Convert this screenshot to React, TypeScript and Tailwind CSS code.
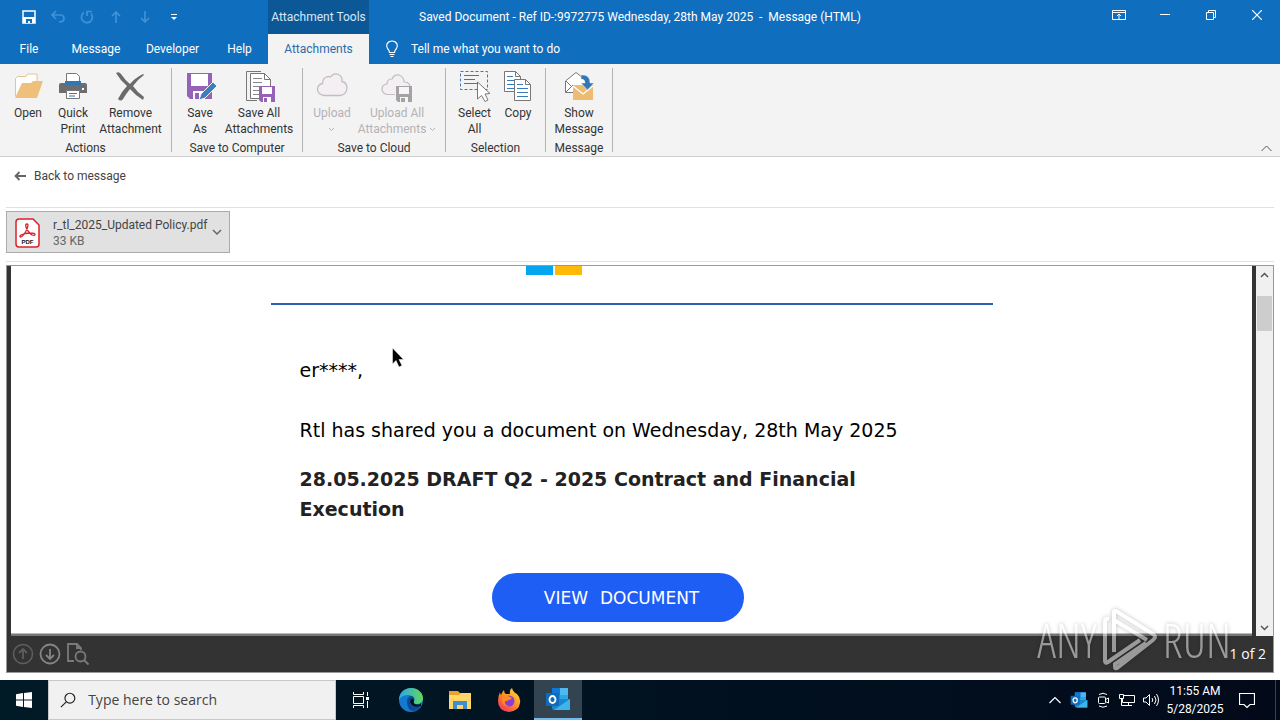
import type { ReactNode } from 'react'

type IconProps = { children: ReactNode; size?: number }

function Icon({ children, size = 32 }: IconProps) {
  return (
    <svg width={size} height={size} viewBox={`0 0 ${size} ${size}`} fill="none" aria-hidden="true">
      {children}
    </svg>
  )
}

function OpenIcon() {
  return (
    <Icon>
      <path d="M3.500 26V8.500l2-2H14l1.500-2.500h9.500v8" fill="#fff" stroke="#e8c48c" />
      <path d="M3 28 10 13h9l2-2h10l-6 17Z" fill="#eec07c" />
    </Icon>
  )
}

function PrintIcon() {
  return (
    <Icon>
      <path d="M9.500 12V3.500h10l3 3V12" fill="#fff" stroke="#777" />
      <path d="M4 13h24q2 0 2 2v8H2v-8q0-2 2-2Z" fill="#6d6d6d" />
      <path d="M8 11h16v4H8z" fill="#2f78b5" />
      <path d="M25 18h2v2h-2z" fill="#fff" />
      <path d="M9.500 20.500h13v8h-13z" fill="#fff" stroke="#777" />
      <path d="M12 23.500h8M12 26h6" stroke="#2f78b5" />
    </Icon>
  )
}

function RemoveIcon() {
  return (
    <Icon>
      <path d="M1 3q3-2 5 1 4 6 9 10 5-6 13-10l1 1q-7 5-11 11 4 6 11 11l-1 3q-8-5-13-11-4 5-7 10-2 3-5 0 4-8 9-13Q5 10 1 3Z" fill="#6b6b6b" />
    </Icon>
  )
}

function SaveAsIcon() {
  return (
    <Icon>
      <path d="M3 3h25v26H6l-3-3Z" fill="#9463b8" />
      <path d="M7 4h17v12H7z" fill="#fff" />
      <path d="M9 21h12v8H9z" fill="#fff" />
      <path d="M11 23h4v6h-4z" fill="#9463b8" />
      <path d="M15 30 17 24 29 12l4 4-12 12Z" fill="#3b7fc0" stroke="#f3f3f3" />
    </Icon>
  )
}

function SaveAllIcon() {
  return (
    <Icon>
      <path d="M14 30.500H3.500V1.500H18" stroke="#777" />
      <path d="M16 28.500H7.500V3.500h14l6 6V16" fill="#fff" stroke="#777" />
      <path d="M21.500 3.500v6h6" stroke="#777" />
      <path d="M10 8.500h9M10 12.500h9M10 16.500h6M10 20.500h6M10 24.500h6" stroke="#888" />
      <path d="M16 16h16v16H18l-2-2Z" fill="#9463b8" />
      <path d="M19 17h10v7H19zM20 27h8v5h-8z" fill="#fff" />
      <path d="M21 28h3v4h-3z" fill="#9463b8" />
    </Icon>
  )
}

function UploadIcon() {
  return (
    <Icon>
      <path d="M8 25.500q-6-1-6.500-6 0-5 5-6 0-5 4-6.500 2-1 4 0 3-4.500 8-2.500 4 2 3.500 7 5 1 5 6.500-.500 6.500-7 7.500Z" stroke="#c4bcc4" strokeWidth="1.300" fill="#f3eff3" />
    </Icon>
  )
}

function UploadAllIcon() {
  return (
    <Icon>
      <path d="M14 24.500H6q-5-1-5-5.500t5-5q0-5 5-5 2-5 7-4 5 2 5 7 5 0 6 4" stroke="#c4bcc4" strokeWidth="1.200" fill="#f3eff3" />
      <path d="M15 16h16v16H17l-2-2Z" fill="#a5a2a5" />
      <path d="M18 17h10v7H18zM19 27h8v5h-8z" fill="#f6f6f6" />
      <path d="M20 28h4v4h-4z" fill="#a5a2a5" />
    </Icon>
  )
}

function SelectAllIcon() {
  return (
    <Icon>
      <path d="M1.500 1.500h27v18h-27z" stroke="#3a7ab8" strokeDasharray="3 2" />
      <path d="M5 5.500h15M5 9.500h11M5 13.500h15" stroke="#3a7ab8" />
      <path d="M18.500 12v17l4-3.500 3.500 6 3-1.500-3-6 5-.500Z" fill="#fff" stroke="#777" />
    </Icon>
  )
}

function CopyIcon() {
  return (
    <Icon>
      <path d="M2.500 1.500h11l5 5v15h-16z" fill="#fff" stroke="#777" />
      <path d="M13.500 1.500v5h5" stroke="#777" />
      <path d="M5 6.500h6M5 10.500h8M5 14.500h8M5 18.500h8" stroke="#3a7ab8" />
      <path d="M12.500 9.500h11l5 5v16h-16z" fill="#fff" stroke="#777" />
      <path d="M23.500 9.500v5h5" stroke="#777" />
      <path d="M15 14.500h6M15 18.500h11M15 22.500h11M15 26.500h11" stroke="#3a7ab8" />
    </Icon>
  )
}

function ShowMessageIcon() {
  return (
    <Icon>
      <path d="M2.500 22.500V11L13 2.500 24 11v11.500Z" fill="#fff" stroke="#777" />
      <path d="m3 22 7-7M3 11l6 6" stroke="#777" />
      <path d="M10 15h20v15H10z" fill="#eebb72" />
      <path d="m10 16 10 8 10-8" stroke="#fff" strokeWidth="1.300" />
      <path d="M18 5q9-1 9 8h4l-6.500 7-6.500-7h4q0-4-4-4Z" fill="#2f78b5" stroke="#f3f3f3" strokeWidth=".500" />
    </Icon>
  )
}

function Caret() {
  return (
    <svg width="7" height="5" viewBox="0 0 7 5" fill="none" className="inline-block" aria-hidden="true">
      <path d="m1 1 2.500 2.500L6 1" stroke="currentColor" />
    </svg>
  )
}

type RibbonButtonProps = { icon: ReactNode; width: string; disabled?: boolean; children: ReactNode }

function RibbonButton({ icon, width, disabled, children }: RibbonButtonProps) {
  return (
    <button
      disabled={disabled}
      className={`flex flex-col items-center whitespace-nowrap text-center leading-4 text-[#333] disabled:text-[#b5b2b5] ${width}`}
    >
      <span className="mb-px flex h-9 items-center">{icon}</span>
      <span>{children}</span>
    </button>
  )
}

type RibbonGroupProps = { label: string; children: ReactNode }

function RibbonGroup({ label, children }: RibbonGroupProps) {
  return (
    <section className="flex h-[84px] flex-col border-r border-[#b4b4b4] px-[6px]">
      <div className="flex h-[72px] shrink-0 justify-center">{children}</div>
      <h2 className="whitespace-nowrap text-center leading-4 text-[#333]">{label}</h2>
    </section>
  )
}

function Header() {
  return (
    <header className="bg-[#106ebe] text-white">
      <div className="grid h-[34px] grid-cols-[1fr_auto_1fr]">
        <div className="flex">
          <div className="flex w-[268px] items-center gap-[5px] pl-[17px]">
            <button aria-label="Save" className="flex w-6 justify-center">
              <Icon size={16}>
                <path d="M2 2h12v12H2z" stroke="#fff" strokeWidth="1.500" />
                <path d="M2 8h12v6H2z" fill="#fff" />
                <path d="M5 10h6v4H9v-2H7v2H5z" fill="#106ebe" />
              </Icon>
            </button>
            <button aria-label="Undo" className="flex w-6 justify-center text-[#3f92d8]">
              <Icon size={16}>
                <path d="M6 2 2 6l4 4M2 6h8q4 0 4 3.500T9 13" stroke="currentColor" strokeWidth="1.700" />
              </Icon>
            </button>
            <button aria-label="Redo" className="flex w-6 justify-center text-[#3f92d8]">
              <Icon size={16}>
                <path d="M5 3.500a5.500 5.500 0 1 0 7 1M8 7V2.500h5" stroke="currentColor" strokeWidth="1.700" />
              </Icon>
            </button>
            <button aria-label="Previous item" className="flex w-6 justify-center text-[#3f92d8]">
              <Icon size={16}>
                <path d="M8 14V3M4 7l4-4 4 4" stroke="currentColor" strokeWidth="1.700" />
              </Icon>
            </button>
            <button aria-label="Next item" className="flex w-6 justify-center text-[#3f92d8]">
              <Icon size={16}>
                <path d="M8 2v11M4 9l4 4 4-4" stroke="currentColor" strokeWidth="1.700" />
              </Icon>
            </button>
            <button aria-label="Customize toolbar" className="flex w-6 justify-center">
              <Icon size={8}>
                <path d="M1 1.500h6" stroke="#fff" />
                <path d="M1 4h6L4 7Z" fill="#fff" />
              </Icon>
            </button>
          </div>
          <div className="flex w-[101px] items-center justify-center whitespace-nowrap bg-[#0c5796] text-[#d5e8f8]">
            Attachment Tools
          </div>
        </div>
        <h1 className="self-center whitespace-pre leading-4">
          Saved Document - Ref ID-:9972775 Wednesday, 28th May 2025{'  -  '}Message (HTML)
        </h1>
        <div className="flex h-[30px] justify-end">
          <button aria-label="Ribbon display options" className="flex w-[46px] items-center justify-center">
            <Icon size={14}>
              <path d="M.500 2.500h13v9H.500zM.500 4.500h13M7 11V6M5 8l2-2 2 2" stroke="#fff" />
            </Icon>
          </button>
          <button aria-label="Minimize" className="flex w-[46px] items-center justify-center">
            <Icon size={10}>
              <path d="M0 4.500h10" stroke="#fff" />
            </Icon>
          </button>
          <button aria-label="Restore" className="flex w-[46px] items-center justify-center">
            <Icon size={10}>
              <path d="M.500 2.500h7v7h-7zM2.500 2V.500h7v7H8" stroke="#fff" />
            </Icon>
          </button>
          <button aria-label="Close" className="flex w-[46px] items-center justify-center">
            <Icon size={10}>
              <path d="m0 0 10 10M10 0 0 10" stroke="#fff" strokeWidth="1.200" />
            </Icon>
          </button>
        </div>
      </div>
      <nav className="flex h-[30px] items-stretch">
        <button className="w-[58px]">File</button>
        <button className="w-[76px]">Message</button>
        <button className="w-[77px]">Developer</button>
        <button className="w-[57px]">Help</button>
        <button className="w-[101px] bg-[#f3f3f3] text-[#2b6cab]">Attachments</button>
        <button className="flex items-center gap-3 pl-4">
          <svg width="14" height="18" viewBox="0 0 14 18" fill="none" aria-hidden="true">
            <path d="M4.500 12.500q0-2-2-4Q1 6.500 2 4q1.500-3 5-3t5 3q1 2.500-.500 4.500-2 2-2 4ZM4.500 14.500h5M5.500 16.500h3" stroke="#fff" strokeWidth="1.200" />
          </svg>
          Tell me what you want to do
        </button>
      </nav>
    </header>
  )
}

function Ribbon() {
  return (
    <div className="flex h-[93px] border-b border-[#cfcfcf] bg-[#f3f3f3] pt-1">
      <RibbonGroup label="Actions">
        <RibbonButton icon={<OpenIcon />} width="w-[44px]">Open</RibbonButton>
        <RibbonButton icon={<PrintIcon />} width="w-[46px]">Quick<br />Print</RibbonButton>
        <RibbonButton icon={<RemoveIcon />} width="w-[69px]">Remove<br />Attachment</RibbonButton>
      </RibbonGroup>
      <RibbonGroup label="Save to Computer">
        <RibbonButton icon={<SaveAsIcon />} width="w-[44px]">Save<br />As</RibbonButton>
        <RibbonButton icon={<SaveAllIcon />} width="w-[74px]">Save All<br />Attachments</RibbonButton>
      </RibbonGroup>
      <RibbonGroup label="Save to Cloud">
        <RibbonButton icon={<UploadIcon />} width="w-[46px]" disabled>Upload<br /><Caret /></RibbonButton>
        <RibbonButton icon={<UploadAllIcon />} width="w-[84px]" disabled>
          Upload All<br />Attachments <Caret />
        </RibbonButton>
      </RibbonGroup>
      <RibbonGroup label="Selection">
        <RibbonButton icon={<SelectAllIcon />} width="w-[45px]">Select<br />All</RibbonButton>
        <RibbonButton icon={<CopyIcon />} width="w-[42px]">Copy</RibbonButton>
      </RibbonGroup>
      <RibbonGroup label="Message">
        <RibbonButton icon={<ShowMessageIcon />} width="w-[54px]">Show<br />Message</RibbonButton>
      </RibbonGroup>
      <button aria-label="Collapse the ribbon" className="mr-2 mb-1 ml-auto self-end">
        <svg width="11" height="7" viewBox="0 0 11 7" fill="none" aria-hidden="true">
          <path d="m.500 6 5-5 5 5" stroke="#555" />
        </svg>
      </button>
    </div>
  )
}

function AttachmentBar() {
  return (
    <div className="mx-[6px]">
      <div className="h-[51px] border-b border-[#e1e1e1] pt-[10px]">
        <button className="flex items-center gap-[7px] pl-2 leading-[18px] text-[#444]">
          <svg width="13" height="10" viewBox="0 0 13 10" fill="none" aria-hidden="true">
            <path d="M5.500 1 1.500 5l4 4M2 5h10" stroke="#666" strokeWidth="1.800" />
          </svg>
          Back to message
        </button>
      </div>
      <div className="h-[54px] border-b border-[#e1e1e1] pt-[3px]">
        <button className="flex h-[42px] w-56 items-center border border-[#ababab] bg-[#e1e1e1] pt-px pl-2 text-left leading-4 text-[#444]">
          <svg width="25" height="30" viewBox="0 0 25 30" fill="none" aria-hidden="true">
            <path d="M4 1h14l6 6v19q0 3-3 3H4q-3 0-3-3V4q0-3 3-3Z" fill="#fff" stroke="#d9222a" strokeWidth="1.500" />
            <path d="M12 6q-2 0-1 3 1 4 6 8 3 1 3-.500T15 15q-5 0-9 2-2 1.500-.500 2 2 0 5-5 2.500-4 2.500-7 0-1-1-1Z" stroke="#d9222a" strokeWidth="1.300" />
            <text x="12.500" y="26" textAnchor="middle" fontFamily="Liberation Sans, sans-serif" fontSize="6" fontWeight="bold" fill="#111">PDF</text>
          </svg>
          <span className="ml-[13px] flex-1 whitespace-nowrap">
            <span className="block">r_tl_2025_Updated Policy.pdf</span>
            <span className="block text-[#666]">33 KB</span>
          </span>
          <svg width="10" height="7" viewBox="0 0 10 7" fill="none" className="mr-[7px]" aria-hidden="true">
            <path d="m1 1 4 4 4-4" stroke="#666" strokeWidth="1.500" />
          </svg>
        </button>
      </div>
    </div>
  )
}

function DocumentPage() {
  return (
    <article className="relative flex-1 overflow-hidden border-x-4 border-[#333] bg-white font-['DejaVu_Sans',sans-serif] text-[19px] leading-[30px] text-black">
      <div className="mx-auto w-full max-w-[722px]">
        <div className="flex h-[39px] gap-[2px] border-b-2 border-[#2b62b5] pl-[255px]">
          <span className="h-[9px] w-[27px] bg-[#05a6f0]" />
          <span className="h-[9px] w-[27px] bg-[#ffba08]" />
        </div>
        <div className="pt-[50px] pr-[57px] pl-[29px]">
          <p>er****,</p>
          <p className="mt-[30px] whitespace-nowrap">Rtl has shared you a document on Wednesday, 28th May 2025</p>
          <h2 className="mt-[19px] font-bold text-[#222]">
            28.05.2025 DRAFT Q2 - 2025 Contract and Financial
            <br />
            Execution
          </h2>
          <a
            href="#document"
            className="mx-auto mt-[49px] flex h-[49px] w-[252px] items-center justify-center gap-3 rounded-full bg-[#1f5ef5] pl-2 text-[17px] text-white"
          >
            <span>VIEW</span>
            <span>DOCUMENT</span>
          </a>
        </div>
      </div>
      <svg width="12" height="21" viewBox="0 0 12 21" className="absolute top-[81px] left-[381px]" aria-hidden="true">
        <path d="M.500 1v16l3.500-3.500 3 6.500 3-1.500-3-6h4.500Z" fill="#000" stroke="#fff" strokeWidth=".500" />
      </svg>
    </article>
  )
}

function Watermark() {
  return (
    <div className="pointer-events-none absolute right-[42px] bottom-0 flex h-16 items-center gap-[5px] font-['Open_Sans_Condensed_Light','Open_Sans_Condensed','Roboto_Condensed','Liberation_Sans_Narrow',sans-serif] text-[47px] leading-[60px] font-light text-white opacity-50 drop-shadow-[0_0_2px_rgba(0,0,0,0.5)]">
      <span>ANY</span>
      <svg width="56" height="62" viewBox="0 0 56 62" fill="none" aria-hidden="true">
        <path d="M12 43V3q0-2 2-1l37 23q4 3 0 6L15 59q-2 1-2-1v-3l31-21" stroke="currentColor" strokeWidth="4" />
        <path d="M7 10q-4-1-4 2v40q0 3 3 1l32-22M12 11l33 20" stroke="currentColor" strokeWidth="4" />
      </svg>
      <span>RUN</span>
    </div>
  )
}

function Viewer() {
  return (
    <main className="relative mx-[6px] mt-[3px] mb-[7px] flex min-h-0 flex-1 flex-col border border-[#999] bg-[#333]">
      <div className="flex min-h-0 flex-1">
        <div className="flex min-w-0 flex-1 flex-col">
          <DocumentPage />
          <div className="mx-1 h-[3px] border-t border-[#bbb] bg-[#777]" />
        </div>
        <div className="flex w-[17px] flex-col items-center bg-[#f0f0f0]">
          <button aria-label="Scroll up" className="flex h-[30px] items-start pt-[6px]">
            <svg width="9" height="6" viewBox="0 0 9 6" fill="none" aria-hidden="true">
              <path d="m1 5 3.500-3.500L8 5" stroke="#555" strokeWidth="1.500" />
            </svg>
          </button>
          <div className="h-[35px] w-[15px] bg-[#cdcdcd]" />
          <button aria-label="Scroll down" className="mt-auto pb-[5px]">
            <svg width="9" height="6" viewBox="0 0 9 6" fill="none" aria-hidden="true">
              <path d="m1 1 3.500 3.500L8 1" stroke="#555" strokeWidth="1.500" />
            </svg>
          </button>
        </div>
      </div>
      <Watermark />
      <div className="flex h-9 items-center gap-[5px] pr-[7px] pl-[5px]">
        <button aria-label="Previous page" className="text-[#5e5e5e]">
          <Icon size={22}>
            <path d="M11 16V6M7 10l4-4 4 4" stroke="currentColor" strokeWidth="1.800" />
            <circle cx="11" cy="11" r="9.500" stroke="currentColor" strokeWidth="1.600" />
          </Icon>
        </button>
        <button aria-label="Next page" className="text-[#858585]">
          <Icon size={22}>
            <path d="M11 6v10M7 12l4 4 4-4" stroke="currentColor" strokeWidth="1.800" />
            <circle cx="11" cy="11" r="9.500" stroke="currentColor" strokeWidth="1.800" />
          </Icon>
        </button>
        <button aria-label="Find in document" className="text-[#7a7a7a]">
          <Icon size={24}>
            <path d="M8 19H2V2h9l4 4v2M11 2v4h4" stroke="currentColor" strokeWidth="1.800" />
            <circle cx="14.500" cy="14.500" r="5" stroke="currentColor" strokeWidth="1.800" />
            <path d="m18 18 4.500 4.500" stroke="currentColor" strokeWidth="2" />
          </Icon>
        </button>
        <span className="relative ml-auto font-['Open_Sans',sans-serif] text-sm text-white">1 of 2</span>
      </div>
    </main>
  )
}

function OutlookIcon({ size }: { size: number }) {
  return (
    <svg width={size} height={size} viewBox="0 0 26 26" aria-hidden="true">
      <path d="M7 2h16v19H7z" fill="#1490df" />
      <path d="M15 2h8v7h-8z" fill="#50b8f0" />
      <path d="M7 2h8v7H7z" fill="#0f78d4" />
      <path d="M15 9h8v6h-8z" fill="#28a8ea" />
      <path d="M7 13h18v11H9q-2 0-2-2Z" fill="#1a86d0" />
      <path d="M25 13v11H9Z" fill="#40b4ea" />
      <rect x="1" y="7" width="13" height="13" rx="1" fill="#0f6cbd" />
      <ellipse cx="7.500" cy="13.500" rx="3" ry="3.500" fill="none" stroke="#fff" strokeWidth="1.800" />
    </svg>
  )
}

function EdgeIcon() {
  return (
    <svg width="24" height="24" viewBox="0 0 24 24" aria-hidden="true">
      <defs>
        <linearGradient id="edge-top" x1="0" y1="0" x2="1" y2="0">
          <stop offset="0" stopColor="#2aa7e8" />
          <stop offset="1" stopColor="#62d75a" />
        </linearGradient>
      </defs>
      <circle cx="12" cy="12" r="12" fill="#1479cf" />
      <path d="M0 12C0 5 5 0 12 0s12 5 12 10c0 4-3 6-6 6-4 0-4-1-3-3 1-3-2-6-6-6-5 0-8 3-9 5Z" fill="url(#edge-top)" />
      <path d="M8 13c0-3 2-5 4-5 3 0 4 3 3 5-1 3 3 5 7 4-2 4-5 6-8 6-4 0-6-5-6-10Z" fill="#0c4b94" />
      <path d="M15 13c-1 2 0 3.500 3 3.500 2 0 3-.500 4-1.500v3q-6 2-9-1t-1-6q3-1 3 2Z" fill="#001420" />
    </svg>
  )
}

function FirefoxIcon() {
  return (
    <svg width="24" height="24" viewBox="0 0 24 24" aria-hidden="true">
      <defs>
        <linearGradient id="fox" x1="1" y1="0" x2="0.200" y2="1">
          <stop offset="0" stopColor="#ffe545" />
          <stop offset="0.500" stopColor="#ff9425" />
          <stop offset="1" stopColor="#f5315b" />
        </linearGradient>
      </defs>
      <path d="M3 4q0 2 1 3 1-3 3-5 0 3 2 4h4q-1-4 2-6 1 4 5 6 4 4 3 9-1 8-11 9Q1 23 1 13q0-5 2-9Z" fill="url(#fox)" />
      <circle cx="12" cy="13" r="5.500" fill="#8a3fd1" />
      <path d="M5 8q4-2 8 1l2 1q-1 2-4 2-1 2-3 1-1 4 4 5-6 1-7-5Z" fill="#ff8a22" />
    </svg>
  )
}

function Taskbar() {
  return (
    <footer className="flex h-10 shrink-0 bg-linear-to-r from-[#001a26] to-[#020a1a] text-white">
      <button aria-label="Start" className="flex w-12 items-center justify-center">
        <Icon size={16}>
          <path d="M0 2.200 7 1v6.500H0zM8 .900 16 0v7.500H8zM0 8.500h7V15l-7-1.200zM8 8.500h8V16l-8-1.100z" fill="#fff" />
        </Icon>
      </button>
      <label className="flex w-72 items-center gap-3 border border-[#c8c8c8] bg-[#f1f1f1] pl-[11px]">
        <Icon size={18}>
          <circle cx="11" cy="7" r="5.500" stroke="#222" strokeWidth="1.300" />
          <path d="m7 11-6 6" stroke="#222" strokeWidth="1.300" />
        </Icon>
        <input
          type="text"
          aria-label="Search"
          placeholder="Type here to search"
          className="w-full bg-transparent font-['Open_Sans',sans-serif] text-sm outline-none placeholder:text-[#444]"
        />
      </label>
      <div className="flex gap-px">
        <button aria-label="Task View" className="flex w-[50px] items-center justify-center">
          <Icon size={18}>
            <path d="M1.500 1v2.500h10V1M1.500 17v-2.500h10V17M1.500 5.500h10v7h-10zM15.500 1v4M15.500 10v7" stroke="#fff" />
            <path d="M14 6h3v3h-3z" fill="#fff" />
          </Icon>
        </button>
        <button aria-label="Edge" className="flex w-12 items-center justify-center">
          <EdgeIcon />
        </button>
        <button aria-label="File Explorer" className="flex w-12 items-center justify-center">
          <svg width="22" height="20" viewBox="0 0 22 20" aria-hidden="true">
            <path d="M0 1h9l2 2h10v4H0z" fill="#e9a32c" />
            <path d="M0 5h10l2-2h10v16H0z" fill="#ffd667" />
            <path d="M4 11h14v8h-4v-4H8v4H4z" fill="#3e8ed0" />
          </svg>
        </button>
        <button aria-label="Firefox" className="flex w-12 items-center justify-center">
          <FirefoxIcon />
        </button>
        <button aria-label="Outlook" className="flex w-12 items-center justify-center border-b-2 border-[#76b9ed] bg-[#33434f]">
          <OutlookIcon size={26} />
        </button>
      </div>
      <div className="ml-auto flex items-center">
        <button aria-label="Show hidden icons" className="flex w-6 justify-center">
          <Icon size={12}>
            <path d="m.500 9 5.500-5.500L11.500 9" stroke="#fff" strokeWidth="1.200" />
          </Icon>
        </button>
        <button aria-label="Outlook notifications" className="flex w-6 justify-center">
          <OutlookIcon size={18} />
        </button>
        <button aria-label="Meet Now" className="flex w-6 justify-center">
          <Icon size={16}>
            <rect x="3.500" y="5" width="7" height="6.500" rx="1" stroke="#fff" />
            <path d="m10.500 7.500 3-1.500v5l-3-1.500M4 2.500q4-2.500 8 0M4 14q4 2.500 8 0" stroke="#fff" />
          </Icon>
        </button>
        <button aria-label="Network" className="flex w-6 justify-center">
          <Icon size={16}>
            <path d="M5 3.500h10.500v7H3.500V7M9.500 10.500v3M6 13.500h7M.500 2.500h4v4h-4zM2.500 6.500v7H6" stroke="#fff" />
          </Icon>
        </button>
        <button aria-label="Volume" className="flex w-6 justify-center">
          <Icon size={16}>
            <path d="M.500 6h2.500l3.500-3.500v11L3 10H.500zM9 6q1.500 2 0 4M11.500 4q3 4 0 8M13.500 2q4 6 0 12" stroke="#fff" />
          </Icon>
        </button>
        <div className="w-16 whitespace-nowrap text-center leading-[18px]">
          <div>11:55 AM</div>
          <div>5/28/2025</div>
        </div>
        <button aria-label="Notifications" className="flex w-10 justify-center">
          <Icon size={16}>
            <path d="M.500 1.500h15v11H11l-3 3-3-3H.500z" stroke="#fff" strokeWidth="1.200" />
          </Icon>
        </button>
        <div className="mr-1 ml-2 h-10 w-px bg-[#39434d]" />
      </div>
    </footer>
  )
}

export default function App() {
  return (
    <div className="flex h-screen flex-col bg-white font-[Roboto,sans-serif] text-xs">
      <Header />
      <Ribbon />
      <AttachmentBar />
      <Viewer />
      <Taskbar />
    </div>
  )
}
